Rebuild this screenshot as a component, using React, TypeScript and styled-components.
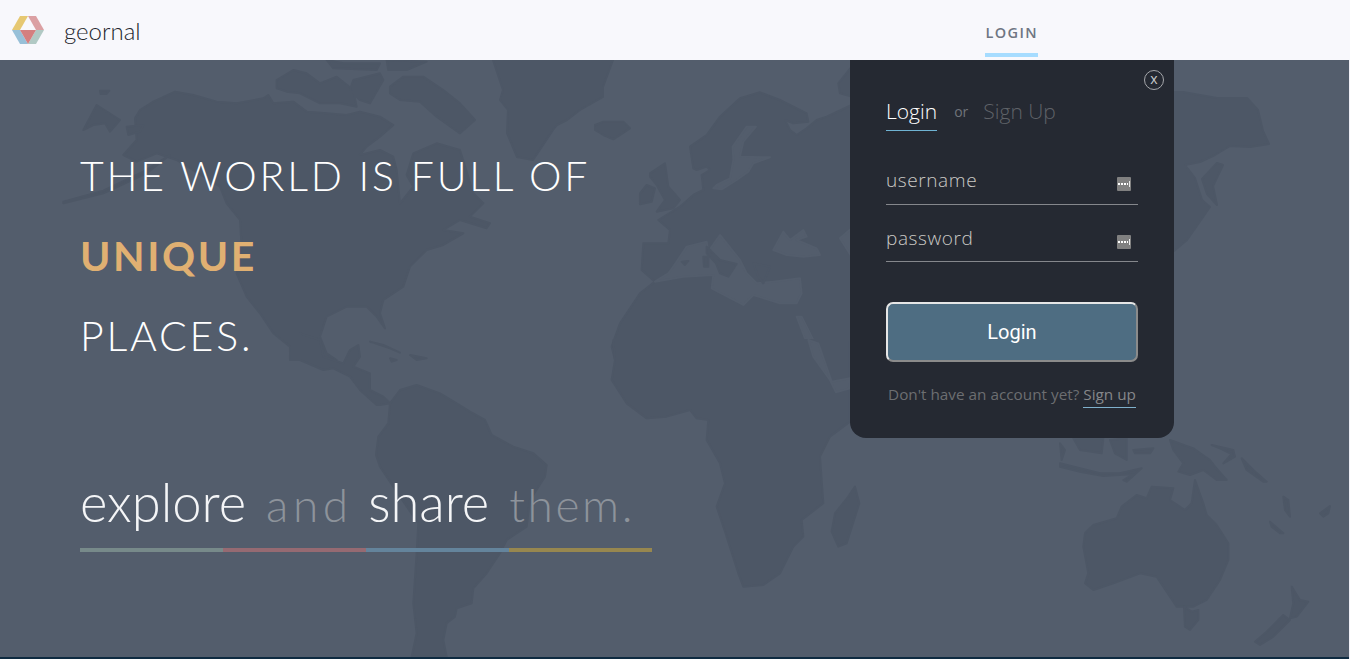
import React from "react";
import styled, { createGlobalStyle } from "styled-components";

const GlobalStyle = createGlobalStyle`
  html, body {
    margin: 0;
    padding: 0;
    height: 100%;
    overflow: hidden;
    background: #f1f1f8;
  }
  * {
    box-sizing: border-box;
  }
`;

const Page = styled.div`
  display: flex;
  flex-direction: column;
  height: 659px;
  font-family: "Open Sans", "Liberation Sans", sans-serif;
`;

const Header = styled.header`
  display: flex;
  align-items: center;
  height: 60px;
  flex: none;
  padding: 0 312px 0 12px;
  background: #f8f8fc;
`;

const Brand = styled.div`
  font-family: "Lato", sans-serif;
  font-weight: 300;
  font-size: 24px;
  color: #23262d;
  margin-left: 20px;
`;

const NavLink = styled.a`
  display: flex;
  align-items: center;
  margin-left: auto;
  height: 44px;
  margin-top: 9px;
  border-bottom: 4px solid #a6dcff;
  font-size: 14.5px;
  font-weight: 600;
  letter-spacing: 1.4px;
  color: #6f7683;
  padding-bottom: 1px;
`;

const Hero = styled.main`
  position: relative;
  flex: 1;
  margin-right: 1px;
  padding: 76px 0 0 80px;
  background: #535d6c;
  border-bottom: 2px solid #0f2b41;
  overflow: hidden;
`;

const MapLayer = styled.svg`
  position: absolute;
  inset: 0;
  width: 1350px;
  height: 599px;
`;

const Land = styled.g`
  fill: #4d5766;
  stroke: #4d5766;
  stroke-width: 2px;
  stroke-linejoin: round;

  & > * {
    vector-effect: non-scaling-stroke;
  }
`;

const Sea = styled(Land)`
  fill: #535d6c;
  stroke: #535d6c;
`;

const Headline = styled.h1`
  position: relative;
  margin: 0;
  font-family: "Lato", sans-serif;
  font-weight: 300;
  font-size: 41px;
  line-height: 80px;
  color: #fff;
`;

const HeadLine = styled.div<{ $accent?: boolean }>`
  letter-spacing: ${(p) => (p.$accent ? "2.6px" : "2.8px")};
  font-weight: ${(p) => (p.$accent ? 700 : 300)};
  color: ${(p) => (p.$accent ? "#e0b072" : "#fff")};
`;

const Tagline = styled.div`
  position: relative;
  display: flex;
  align-items: baseline;
  gap: 20px;
  margin-top: 95px;
  height: 61px;
  font-family: "Lato", sans-serif;
  font-weight: 300;
  line-height: 61px;
  white-space: nowrap;
`;

const TagWord = styled.span`
  font-size: 52.5px;
  color: #f4f5f7;
`;

const DimWord = styled.span<{ $track: number }>`
  font-size: 46px;
  color: #8d939b;
  letter-spacing: ${(p) => p.$track}px;
  margin-right: -${(p) => p.$track}px;
`;

const ColorBar = styled.div`
  position: relative;
  display: flex;
  width: 572px;
  height: 4px;
  margin-top: 16px;
`;

const BarPiece = styled.div<{ $color: string }>`
  flex: 1;
  background: ${(p) => p.$color};
`;

const LoginPanel = styled.section`
  position: absolute;
  top: 0;
  left: 850px;
  width: 324px;
  height: 378px;
  padding: 36px 36px 0;
  background: #252932;
  border-radius: 0 0 16px 16px;
`;

const CloseButton = styled.button`
  position: absolute;
  top: 10px;
  right: 10px;
  display: flex;
  align-items: center;
  justify-content: center;
  width: 20px;
  height: 20px;
  padding: 0 0 2px;
  background: none;
  border: 1px solid #a5a7ab;
  border-radius: 50%;
  color: #c8c9cc;
  font-family: "Open Sans", sans-serif;
  font-size: 14px;
  line-height: 1;
`;

const Tabs = styled.div`
  display: flex;
  align-items: center;
  height: 35px;
`;

const Tab = styled.div<{ $active?: boolean }>`
  height: 35px;
  line-height: 31px;
  font-family: "Open Sans", sans-serif;
  font-weight: 300;
  font-size: 21px;
  color: ${(p) => (p.$active ? "#fff" : "#5f6268")};
  border-bottom: 1px solid ${(p) => (p.$active ? "#6fb3d3" : "transparent")};
`;

const TabSeparator = styled.span`
  margin: 0 15px 0 17px;
  padding-bottom: 4px;
  font-size: 14px;
  color: #70747a;
`;

const Field = styled.div<{ $height: number; $lift?: number }>`
  display: flex;
  align-items: center;
  justify-content: space-between;
  height: ${(p) => p.$height}px;
  padding: ${(p) => p.$height - 40 - (p.$lift ?? 0)}px 7px ${(p) => p.$lift ?? 0}px 0;
  border-bottom: 1px solid #85878c;
`;

const FieldLabel = styled.span`
  font-family: "Open Sans", sans-serif;
  font-weight: 300;
  font-size: 19px;
  letter-spacing: 0.6px;
  color: #cbcac6;
  padding-bottom: 7px;
`;

const KeyIcon = styled.svg`
  width: 14px;
  height: 14px;
  flex: none;
`;

const SubmitButton = styled.button`
  display: block;
  width: 252px;
  height: 60px;
  margin-top: 40px;
  background: #4e6d82;
  border: 2px solid;
  border-color: #e6e6e6 #8b8b8b #8b8b8b #e6e6e6;
  border-radius: 7px;
  color: #fff;
  font-family: "Roboto", sans-serif;
  font-weight: 400;
  font-size: 20px;
`;

const SignupHint = styled.div`
  display: flex;
  justify-content: center;
  gap: 4px;
  margin-top: 21px;
  font-size: 15.3px;
  line-height: 22px;
  color: #6c6e71;
  white-space: nowrap;
`;

const SignupLink = styled.a`
  color: #85878a;
  border-bottom: 1px solid #7fb0cc;
  height: 25px;
`;

const Logo = () => (
  <svg width="32" height="28" viewBox="12 16 32 28" aria-hidden="true">
    <polygon points="20,16 28,16 20,30 12,30" fill="#e6c872" />
    <polygon points="28,16 36,16 44,30 36,30" fill="#dba0a3" />
    <polygon points="12,30 20,30 28,44 20,44" fill="#98c0d8" />
    <polygon points="44,30 36,30 28,44 36,44" fill="#b1c9c4" />
    <polygon points="20,30 36,30 28,44" fill="#d47f7f" />
  </svg>
);

const FieldKey = () => (
  <KeyIcon viewBox="0 0 14 14" aria-hidden="true">
    <rect width="14" height="14" rx="1" fill="#808080" />
    <path d="M1 6h2v2H1zM4 6h2v2H4zM7 6h2v2H7zM10 6h1v2h-1z" fill="#fff" />
    <rect x="12" y="4" width="1" height="6" fill="#e8e8e8" />
  </KeyIcon>
);

// traced from the 3x crops, so every group is scaled by a third
const WorldMap = () => (
  <MapLayer viewBox="0 60 1350 599" aria-hidden="true">
    <Land transform="translate(60 60) scale(0.3333)">
      {/* north america */}
      <path d="M190 285L230 240 225 175 240 150 280 125 345 95 400 105 470 125 530 130 610 115 625 105 640 130 700 125 740 155 800 160 860 165 900 155 960 170 1000 195 960 230 920 260 900 285 960 270 1000 290 1010 330 1020 430 1060 380 1040 345 1060 280 1130 250 1200 270 1240 400 1270 430 1230 470 1290 490 1280 505 1200 480 1150 510 1210 520 1150 555 1100 570 1050 620 1030 680 970 720 960 760 975 805 950 770 920 740 860 740 800 770 780 830 800 880 830 900 690 900 690 860 640 820 600 760 560 710 530 640 545 560 540 480 500 430 480 380 350 300 290 280 230 305z" />
      <path d="M330 285L260 340 130 400 10 430 10 425 130 392 250 335z" />
      <path d="M70 210L110 135 180 180 150 215 135 190 100 195z" />
      <path d="M200 200L250 195 240 215 205 225zM120 92L148 92 140 102 122 102z" />
      <path d="M650 60L700 30 740 40 780 70 830 50 880 90 890 140 840 130 780 130 720 100 680 95 650 85z" />
      <path d="M800 0L850 10 960 10 950 30 820 25z" />
      <path d="M880 60L960 40 970 60 930 130 900 120 870 90z" />
      <path d="M990 80L1030 50 1090 50 1150 90 1200 130 1245 180 1200 220 1130 170 1080 125 1020 120 990 100z" />
      <path d="M980 0L1100 5 1040 30 985 30z" />
    </Land>
    <Land>
      <polygon points="493,60 503,90 500,100 508,110 507,133 517,157 533,160 553,130 557,125 567,120 580,110 603,97 603,87 613,60" />
    </Land>
    <Land transform="translate(300 340) scale(0.3333)">
      {/* mexico to south america */}
      <path d="M0 -20L60 0 70 50 130 70 150 30 175 15 180 50 160 80 210 100 210 150 250 170 270 190 240 195 230 195 180 150 150 110 100 85 70 90 0 60z" />
      <path d="M270 190L300 150 350 135 420 160 470 190 510 215 555 240 575 285 640 320 700 340 740 375 735 410 690 480 680 560 620 600 600 640 560 700 520 745 515 790 470 805 465 830 440 850 430 900 440 950 335 950 350 880 340 790 350 640 355 550 300 470 240 380 228 345 235 290 265 250z" />
      <path d="M210 5L270 25 300 38 250 15zM330 45L380 55 350 60zM270 55L290 60 275 65z" />
    </Land>
    <Land transform="translate(540 60) scale(0.3333)">
      {/* iceland, british isles, eurasia */}
      <path d="M165 195L190 185 250 185 270 205 220 238 190 225 165 210z" />
      <path d="M300 400L320 375 345 385 335 425 300 433z" />
      <path d="M330 340L375 310 385 380 420 420 400 445 350 455 375 420 350 375 330 350z" />
      <path d="M450 260L500 225 540 170 600 115 660 97 720 120 800 160 805 185 760 190 735 180 750 210 770 225 800 205 830 180 860 170 935 135 935 900 225 900 215 860 240 790 300 700 345 665 305 630 310 550 385 550 390 510 355 480 420 440 460 405 490 390 485 345 510 330 500 320 470 330 460 325z" />
      <path d="M895 70L935 20 935 110 900 100z" />
    </Land>
    <Sea transform="translate(540 60) scale(0.3333)">
      <path d="M620 200L648 200 610 245 600 290 690 292 640 310 625 335 590 360 545 388 520 385 530 375 570 355 580 300 578 260z" />
      <path d="M345 665L360 655 385 640 400 620 440 560 500 545 505 575 540 525 600 600 620 640 650 670 700 665 780 655 785 700 770 730 720 730 640 705 610 735 515 685 520 645 430 650z" />
      <path d="M700 570L730 515 750 540 790 510 800 530 770 540 830 565 840 585 790 590 740 585z" />
      <path d="M935 505L900 535 935 590z" />
      <path d="M770 770L785 770 850 900 820 900z" />
    </Sea>
    <Land transform="translate(540 60) scale(0.3333)">
      <path d="M500 560L540 600 590 612 565 650 540 640 528 610 500 580z" />
      <path d="M490 590L505 590 505 620 492 620zM425 605L445 603 435 615zM640 610L690 620 670 670 655 650z" />
    </Land>
    <Land transform="translate(600 340) scale(0.3333)">
      {/* africa */}
      <path d="M40 0L45 60 35 120 80 190 140 235 200 230 270 210 290 235 325 240 320 300 360 370 375 430 350 500 380 590 415 700 430 740 490 735 540 700 580 620 610 590 605 540 670 490 665 420 660 350 690 290 750 245 750 0z" />
    </Land>
    <Sea transform="translate(600 340) scale(0.3333)">
      <path d="M625 0L655 10 695 125 750 115 750 145 708 157 690 120 640 50z" />
    </Sea>
    <Land transform="translate(600 340) scale(0.3333)">
      <path d="M765 440L778 490 740 610 715 620 695 575 705 520 745 470z" />
    </Land>
    <Land>
      {/* asia east of the panel */}
      <polygon points="1174,92 1183,92 1217,98 1247,98 1258,110 1263,131 1269,144 1250,147 1230,146 1215,155 1200,162 1185,165 1195,178 1202,200 1210,207 1187,240 1174,251" />
      <polygon points="1202,179 1217,163 1223,165 1213,186 1217,205 1207,194" />
    </Land>
    <Land transform="translate(1060 400) scale(0.3333)">
      {/* australia, indonesia, new zealand */}
      <path d="M75 400L100 375 170 355 185 320 230 285 260 295 275 260 340 265 330 300 375 330 395 310 405 240 430 310 440 345 470 375 505 430 505 480 480 540 440 600 400 620 350 620 330 590 310 560 290 530 240 520 160 550 100 570 75 550 85 520 70 440z" />
      <path d="M372 620L395 635 415 630 415 660 390 690 375 680z" />
      <path d="M695 560L720 600 745 605 710 650 690 655 700 610z" />
      <path d="M670 645L690 660 640 710 600 735 585 725 620 695z" />
      <path d="M330 120L400 145 450 180 465 200 500 240 470 240 430 210 390 225 355 215 370 190 340 150z" />
      <path d="M0 190L60 205 120 220 180 220 245 205 200 245 190 240 220 222 130 228 60 215 0 200z" />
      <path d="M40 115L130 115 125 160 60 150zM150 120L200 115 200 180 165 160zM220 150L280 145 270 160 225 160zM0 130L15 150 5 180z" />
      <path d="M545 175L580 210 620 245 610 245 560 210zM670 290L685 300 690 350 675 330zM630 365L670 400 660 400 635 380zM780 340L810 318 805 340 790 350zM455 135L520 150 525 170 490 190 515 162 480 145z" />
    </Land>
  </MapLayer>
);

const barColors = ["#778a8a", "#966a72", "#64849c", "#97874f"];

const App = () => (
  <Page>
    <GlobalStyle />
    <Header>
      <Logo />
      <Brand>geornal</Brand>
      <NavLink>LOGIN</NavLink>
    </Header>
    <Hero>
      <WorldMap />
      <Headline>
        <HeadLine>THE WORLD IS FULL OF</HeadLine>
        <HeadLine $accent>UNIQUE</HeadLine>
        <HeadLine>PLACES.</HeadLine>
      </Headline>
      <Tagline>
        <TagWord>explore</TagWord>
        <DimWord $track={4.6}>and</DimWord>
        <TagWord>share</TagWord>
        <DimWord $track={2.6}>them.</DimWord>
      </Tagline>
      <ColorBar>
        {barColors.map((color) => (
          <BarPiece key={color} $color={color} />
        ))}
      </ColorBar>
      <LoginPanel>
        <CloseButton>x</CloseButton>
        <Tabs>
          <Tab $active>Login</Tab>
          <TabSeparator>or</TabSeparator>
          <Tab>Sign Up</Tab>
        </Tabs>
        <Field $height={74} $lift={1}>
          <FieldLabel>username</FieldLabel>
          <FieldKey />
        </Field>
        <Field $height={57}>
          <FieldLabel>password</FieldLabel>
          <FieldKey />
        </Field>
        <SubmitButton>Login</SubmitButton>
        <SignupHint>
          Don't have an account yet? <SignupLink>Sign up</SignupLink>
        </SignupHint>
      </LoginPanel>
    </Hero>
  </Page>
);

export default App;
